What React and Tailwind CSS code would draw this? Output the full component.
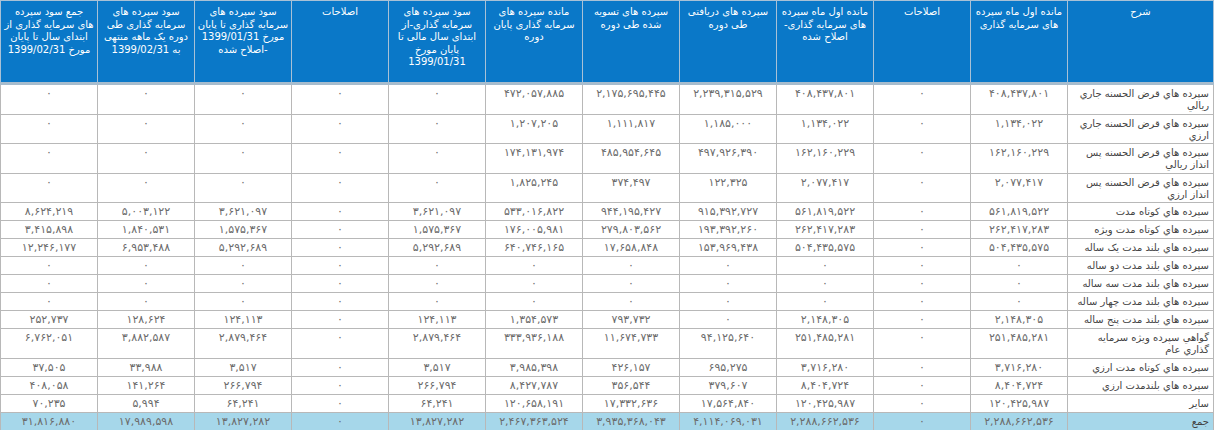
const headers = [
  ["شرح"],
  ["مانده اول ماه سپرده", "های سرمایه گذاری"],
  ["اصلاحات"],
  ["مانده اول ماه سپرده", "های سرمایه گذاری-", "اصلاح شده"],
  ["سپرده های دریافتی", "طی دوره"],
  ["سپرده های تسویه", "شده طی دوره"],
  ["مانده سپرده های", "سرمایه گذاری پایان", "دوره"],
  ["سود سپرده های", "سرمایه گذاری-از", "ابتدای سال مالی تا", "پایان مورخ", "1399/01/31"],
  ["اصلاحات"],
  ["سود سپرده های", "سرمایه گذاری تا پایان", "مورخ 1399/01/31", "-اصلاح شده"],
  ["سود سپرده های", "سرمایه گذاری طی", "دوره یک ماهه منتهی", "به 1399/02/31"],
  ["جمع سود سپرده", "های سرمایه گذاری از", "ابتدای سال تا پایان", "مورخ 1399/02/31"]
];

const rows = [
  [["سپرده هاي قرض الحسنه جاري", "ريالي"], "408,437,801", "0", "408,437,801", "2,239,315,529", "2,175,695,445", "472,057,885", "0", "0", "0", "0", "0"],
  [["سپرده هاي قرض الحسنه جاري", "ارزي"], "1,134,022", "0", "1,134,022", "1,185,000", "1,111,817", "1,207,205", "0", "0", "0", "0", "0"],
  [["سپرده هاي قرض الحسنه پس", "انداز ريالي"], "162,160,229", "0", "162,160,229", "497,926,390", "485,954,645", "174,131,974", "0", "0", "0", "0", "0"],
  [["سپرده هاي قرض الحسنه پس", "انداز ارزي"], "2,077,417", "0", "2,077,417", "122,325", "374,497", "1,825,245", "0", "0", "0", "0", "0"],
  [["سپرده هاي کوتاه مدت"], "561,819,522", "0", "561,819,522", "915,392,727", "944,195,427", "533,016,822", "3,621,097", "0", "3,621,097", "5,003,122", "8,624,219"],
  [["سپرده هاي کوتاه مدت ويژه"], "262,417,283", "0", "262,417,283", "193,392,260", "279,803,562", "176,005,981", "1,575,367", "0", "1,575,367", "1,840,531", "3,415,898"],
  [["سپرده هاي بلند مدت يک ساله"], "504,435,575", "0", "504,435,575", "153,969,438", "17,658,848", "640,746,165", "5,292,689", "0", "5,292,689", "6,953,488", "12,246,177"],
  [["سپرده هاي بلند مدت دو ساله"], "0", "0", "0", "0", "0", "0", "0", "0", "0", "0", "0"],
  [["سپرده هاي بلند مدت سه ساله"], "0", "0", "0", "0", "0", "0", "0", "0", "0", "0", "0"],
  [["سپرده هاي بلند مدت چهار ساله"], "0", "0", "0", "0", "0", "0", "0", "0", "0", "0", "0"],
  [["سپرده هاي بلند مدت پنج ساله"], "2,148,305", "0", "2,148,305", "0", "793,732", "1,354,573", "124,113", "0", "124,113", "128,624", "252,737"],
  [["گواهي سپرده ويژه سرمايه", "گذاري عام"], "251,485,281", "0", "251,485,281", "94,125,640", "11,674,733", "333,936,188", "2,879,464", "0", "2,879,464", "3,882,587", "6,762,051"],
  [["سپرده هاي کوتاه مدت ارزي"], "3,716,280", "0", "3,716,280", "695,275", "426,157", "3,985,398", "3,517", "0", "3,517", "33,988", "37,505"],
  [["سپرده هاي بلندمدت ارزي"], "8,404,724", "0", "8,404,724", "379,607", "356,544", "8,427,787", "266,794", "0", "266,794", "141,264", "408,058"],
  [["ساير"], "120,425,987", "0", "120,425,987", "17,564,840", "17,332,636", "120,658,191", "64,241", "0", "64,241", "5,994", "70,235"]
];

const total = [["جمع"], "2,288,662,536", "0", "2,288,662,536", "4,114,069,031", "3,935,368,043", "2,467,363,524", "13,827,282", "0", "13,827,282", "17,989,598", "31,816,880"];

const fa = (s) => s.replace(/[0-9]/g, (d) => "۰۱۲۳۴۵۶۷۸۹"[d]);

function Lines({ lines }) {
  return lines.map((line, i) => (
    <span key={i} className="block whitespace-nowrap">
      {line}
    </span>
  ));
}

function Row({ row, isTotal }) {
  const [label, ...values] = row;

  return (
    <tr className={isTotal ? "bg-[#a6d7ea]" : "bg-white"}>
      <td className="border border-[#b8b8b8] px-[4px] pt-[3px] pb-[1.5px] text-right align-top text-[10px] text-[#444]">
        <Lines lines={label} />
      </td>
      {values.map((v, i) => (
        <td
          key={i}
          className="border border-[#b8b8b8] px-1 pt-[3px] pb-[2px] text-center align-top text-[#6b6b6b] whitespace-nowrap"
        >
          {fa(v)}
        </td>
      ))}
    </tr>
  );
}

export default function App() {
  return (
    <div className="w-[1216px] bg-white font-['DejaVu_Sans',sans-serif] text-[11px] leading-[12px]">
      <table dir="rtl" className="w-[1214px] table-fixed border-collapse">
        <colgroup>
          <col className="w-[146px]" />
          {headers.slice(1).map((_, i) => (
            <col key={i} className="w-[97px]" />
          ))}
        </colgroup>
        <thead>
          <tr className="h-[83px] bg-[#0a78c8]">
            {headers.map((h, i) => (
              <th
                key={i}
                className="border border-[#a9c1d6] border-b-[3px] border-b-[#a7bccd] px-0 pt-[5px] text-center align-top text-[10px] leading-[12.5px] font-normal text-white"
              >
                <Lines lines={h} />
              </th>
            ))}
          </tr>
        </thead>
        <tbody>
          {rows.map((row, i) => (
            <Row key={i} row={row} />
          ))}
          <Row row={total} isTotal />
        </tbody>
      </table>
    </div>
  );
}
